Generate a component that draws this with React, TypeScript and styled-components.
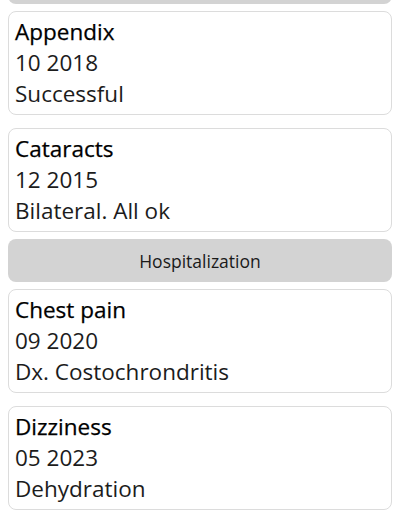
import styled, { createGlobalStyle } from 'styled-components';

const GlobalStyle = createGlobalStyle`
  body {
    margin: 0;
    background: #ffffff;
    font-family: "Open Sans", "Noto Sans", sans-serif;
    color: #1c1c1c;
  }
`;

// list is scrolled: the first section header sits mostly above the viewport
const Page = styled.div`
  display: flex;
  flex-direction: column;
  gap: 7px;
  padding: 0 8px;
  margin-top: -39px;
`;

const Section = styled.section`
  display: flex;
  flex-direction: column;
  gap: 7px;
`;

const SectionHeader = styled.div`
  height: 43px;
  border-radius: 8px;
  background: #d3d3d3;
  display: flex;
  align-items: center;
  justify-content: center;
  font-size: 17.5px;
  color: #1a1a1a;
`;

const CardList = styled.div`
  display: flex;
  flex-direction: column;
  gap: 13px;
`;

const Card = styled.div`
  border: 1px solid #dcdcdc;
  border-radius: 8px;
  padding: 4px 6px 5px;
  font-size: 22.5px;
  line-height: 31px;
`;

const Title = styled.div`
  font-weight: 400;
  color: #000000;
  -webkit-text-stroke: 0.25px #000000;
`;

const Line = styled.div`
  font-weight: 400;
`;

interface IHistoryItem {
  title: string;
  date: string;
  note: string;
}

interface ISection {
  id: string;
  label: string;
  items: IHistoryItem[];
}

const sections: ISection[] = [
  {
    id: 'surgery',
    label: '',
    items: [
      { title: 'Appendix', date: '10 2018', note: 'Successful' },
      { title: 'Cataracts', date: '12 2015', note: 'Bilateral. All ok' },
    ],
  },
  {
    id: 'hospitalization',
    label: 'Hospitalization',
    items: [
      { title: 'Chest pain', date: '09 2020', note: 'Dx. Costochrondritis' },
      { title: 'Dizziness', date: '05 2023', note: 'Dehydration' },
    ],
  },
];

function App() {
  return (
    <>
      <GlobalStyle />
      <Page>
        {sections.map((section) => (
          <Section key={section.id}>
            <SectionHeader>{section.label}</SectionHeader>
            <CardList>
              {section.items.map((item) => (
                <Card key={item.title}>
                  <Title>{item.title}</Title>
                  <Line>{item.date}</Line>
                  <Line>{item.note}</Line>
                </Card>
              ))}
            </CardList>
          </Section>
        ))}
      </Page>
    </>
  );
}

export default App;
